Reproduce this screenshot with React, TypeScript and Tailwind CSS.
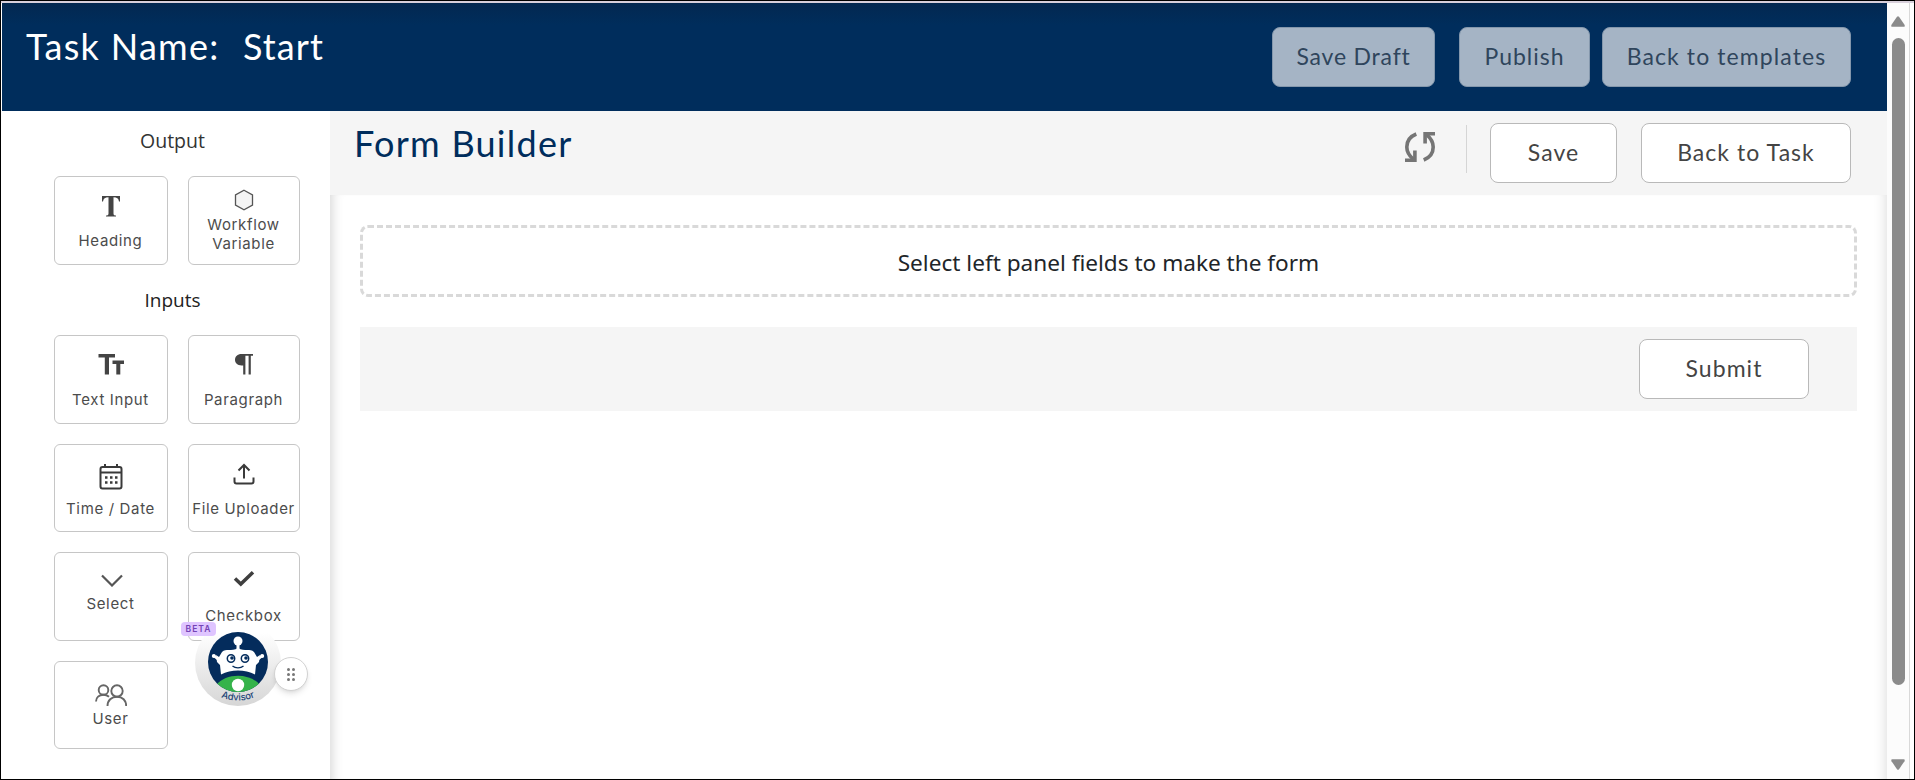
import { ReactNode } from "react";

type FieldProps = {
  label: string;
  icon: ReactNode;
  className?: string;
};

function Field({ label, icon, className = "pt-4" }: FieldProps) {
  return (
    <button
      className={`flex flex-col items-center h-[88.5px] w-full rounded-md border border-[#c6c6c6] bg-white pr-px
      font-[Inter,sans-serif] text-[15px] leading-[19px] tracking-[0.65px] text-[#4c4c4c] ${className}`}
    >
      {icon}
      {label}
    </button>
  );
}

function HeadingIcon() {
  return (
    <svg className="w-[20px] h-[22px] mb-[14px]" viewBox="0 0 20 22" fill="#444">
      <path d="M1 1h18v5.500h-1C17.500 3.500 16 2.300 12.500 2.300V18.500c0 1.500.7 2 2.500 2V21.500H5v-1c1.800 0 2.500-.5 2.500-2V2.300C4 2.300 2.500 3.500 2 6.500H1z" />
    </svg>
  );
}

function HexagonIcon() {
  return (
    <svg className="w-[20px] h-[22px] mb-[4px]" viewBox="0 0 20 22">
      <path d="M10 1.300l8.500 4.700v10L10 20.700 1.500 16V6z" fill="#f4f4f4" stroke="#555" strokeWidth="1.300" />
    </svg>
  );
}

function TextIcon() {
  return (
    <svg className="w-[26px] h-[22px] mb-[15px]" viewBox="0 0 26 22" fill="#444">
      <path d="M.5 1h16.500v3.600H11V21.500H6.800V4.600H.500z" />
      <path d="M14.500 7.500H26v3.600h-3.700V21.500h-4V11.100h-3.800z" />
    </svg>
  );
}

function ParagraphIcon() {
  return (
    <svg className="w-[20px] h-[22px] mb-[15px]" viewBox="0 0 20 22" fill="#444">
      <path d="M7.500 1H19v1.700h-2.200v18.800h-2.200V2.700h-3.200v18.800H9.200V12.500H7.500C3.500 12.500 1 10 1 6.800S3.500 1 7.500 1z" />
    </svg>
  );
}

function CalendarIcon() {
  return (
    <svg className="w-[24px] h-[27px] mb-[9px]" viewBox="0 0 24 27" fill="none" stroke="#3a3a3a" strokeWidth="2">
      <rect x="1.500" y="4" width="21" height="21.500" rx="2" />
      <path d="M2 9.500h20M6 1v3M18 1v3" />
      <path d="M6 14.500h2.500M11 14.500h2.500M16 14.500h2.500M6 19.500h2.500M11 19.500h2.500M16 19.500h2.500" strokeWidth="2.300" />
    </svg>
  );
}

function UploadIcon() {
  return (
    <svg className="w-[22px] h-[22px] mb-[14px]" viewBox="0 0 22 22" fill="none" stroke="#3a3a3a" strokeWidth="2">
      <path d="M11 15.500V2M5.500 7.500L11 2l5.500 5.500" />
      <path d="M1.500 14.500v4c0 1.300.5 2 2 2h15c1.500 0 2-.7 2-2v-4" />
    </svg>
  );
}

function ChevronIcon() {
  return (
    <svg className="w-[22px] h-[13px] mb-[7px] ml-[3px]" viewBox="0 0 22 13" fill="none" stroke="#555" strokeWidth="2.200">
      <path d="M1 1.500l10 10 10-10" />
    </svg>
  );
}

function CheckIcon() {
  return (
    <svg className="w-[22px] h-[17px] mb-[19px]" viewBox="0 0 22 17" fill="none" stroke="#3f3f3f" strokeWidth="3.500">
      <path d="M2 8.500l5.800 5.500L20 2.200" />
    </svg>
  );
}

function UsersIcon() {
  return (
    <svg className="w-[32px] h-[23px] mb-[2px]" viewBox="0 0 32 23" fill="none" stroke="#666" strokeWidth="1.900">
      <circle cx="8.500" cy="6" r="4.800" />
      <circle cx="22" cy="7" r="5.700" />
      <path d="M1 17.500c0-4 3-6.800 7.500-6.800 2.300 0 4 .8 5.500 2.100" />
      <path d="M12.500 22c0-5.500 4-9.300 9.500-9.300s9.200 3.800 9.200 9.300" />
    </svg>
  );
}

function RefreshIcon() {
  return (
    <svg className="w-[32px] h-[32px]" viewBox="0 0 32 32" fill="none" stroke="#757575" strokeWidth="3.600">
      <path d="M12.300 3C6 5.500 2.800 10.500 2.800 16c0 5 2.200 8.500 6.500 12.300" />
      <path d="M1 29.200h9.900V19.500" />
      <path d="M19.700 29c6.300-2.500 9.500-7.500 9.500-13 0-5-2.200-8.500-6.500-12.300" />
      <path d="M31 2.800h-9.900v9.700" />
    </svg>
  );
}

function AdvisorIcon() {
  return (
    <svg className="w-[60px] h-[74px] shrink-0" viewBox="0 0 60 74">
      <defs>
        <clipPath id="face">
          <circle cx="30" cy="30" r="30" />
        </clipPath>
        <path id="curve" d="M4 60.500Q30 76.500 56 60.500" />
      </defs>
      <g clipPath="url(#face)">
        <rect width="60" height="60" fill="#042c5c" />
        <path d="M8 53C18 40.500 42 40.500 52 53L46 62H14z" fill="#35b34a" />
      </g>
      <circle cx="30" cy="53" r="6.200" fill="#fff" />
      <circle cx="30" cy="9" r="4.500" fill="#fff" />
      <path d="M28.500 11h3v7h-3z" fill="#fff" />
      <path
        d="M14 20c4-4 9 0 16-4 7 4 12 0 16 4l3 5 3-2-1 7-3 3-1 9.500C37 37 23 37 13 42.500L12 33l-3-3-1-7 3 2z"
        fill="#fff"
      />
      <path d="M5.500 23.500L11 28M54.500 23.500L49 28" stroke="#fff" strokeWidth="2.500" />
      <circle cx="5.800" cy="24" r="2" fill="#fff" />
      <circle cx="54.200" cy="24" r="2" fill="#fff" />
      <circle cx="23" cy="26.500" r="3.700" fill="#fff" stroke="#042c5c" strokeWidth="1.500" />
      <circle cx="37" cy="26.500" r="3.700" fill="#fff" stroke="#042c5c" strokeWidth="1.500" />
      <circle cx="24" cy="26" r="1.800" fill="#042c5c" />
      <circle cx="38" cy="26" r="1.800" fill="#042c5c" />
      <path d="M24.500 34c3 2.500 8 2.500 11 0" fill="none" stroke="#042c5c" strokeWidth="1.300" />
      <text fill="#1d4477" fontSize="9.500" fontWeight="500" fontFamily="Inter, sans-serif">
        <textPath href="#curve" startOffset="50%" textAnchor="middle">
          Advisor
        </textPath>
      </text>
    </svg>
  );
}

function AdvisorWidget() {
  return (
    <div className="absolute left-[180px] top-[619px] w-[130px] h-[90px]">
      <div className="absolute left-[14px] top-0 size-[86px] rounded-full bg-gradient-to-b from-white from-15% to-[#d6d6d6] flex justify-center pt-[12px]">
        <AdvisorIcon />
      </div>
      <span className="absolute left-0 top-[2px] w-[35px] h-[14px] rounded-sm bg-[#dfc5ff] text-[#7443b5] text-[8.500px] leading-[14px] font-semibold tracking-[1px] text-center font-[Inter,sans-serif]">
        BETA
      </span>
      <div className="absolute left-[93px] top-[37px] size-[34px] rounded-full bg-white border border-[#d2d2d2] shadow-md flex items-center justify-center">
        <div className="grid grid-cols-2 gap-x-[2px] gap-y-[2px]">
          {[0, 1, 2, 3, 4, 5].map((dot) => (
            <i key={dot} className="size-[3px] rounded-full bg-[#777]"></i>
          ))}
        </div>
      </div>
    </div>
  );
}

const outlined =
  "h-[60px] pb-[2px] rounded-lg border border-[#b9b9b9] bg-white text-[#444] text-[23px] tracking-[1.05px] whitespace-nowrap";
const disabled =
  "h-[60px] pb-[2px] rounded-lg border border-[#8497ac] bg-[#a5b4c5] text-[#2f455c] text-[23px] whitespace-nowrap";

export default function App() {
  return (
    <div className="relative w-[1915px] h-[780px] overflow-hidden border border-black bg-white font-[Lato,sans-serif]">
      <div className="h-[2px] bg-[#d8d0db]"></div>
      <div className="flex h-[776px] pl-px">
        <div className="w-[1885px] flex flex-col">
          <header className="h-[108px] shrink-0 flex items-start bg-[#002d5c] bg-gradient-to-b from-[#032850] to-[#002d5c] to-20% pl-[24px] pr-[36px] text-white">
            <h1 className="mt-[19px] text-[36px] leading-[48px] whitespace-pre">
              <span className="inline-block w-[217px] tracking-[1.3px]">Task Name:</span>
              <span className="tracking-[1.1px]">Start</span>
            </h1>
            <div className="ml-auto mt-[24px] flex">
              <button className={`${disabled} w-[163px] mr-[24px] tracking-[0.8px]`}>Save Draft</button>
              <button className={`${disabled} w-[131px] mr-[12px] tracking-[1px]`}>Publish</button>
              <button className={`${disabled} w-[249px] tracking-[1.1px]`}>Back to templates</button>
            </div>
          </header>

          <div className="flex flex-1">
            <aside className="w-[328px] shrink-0 pl-[52px] pr-[28px] font-['Open_Sans',sans-serif]">
              <h2 className="h-[65px] pt-[17px] pr-[11px] text-[19.500px] leading-[26px] text-center text-[#333]">Output</h2>
              <div className="grid grid-cols-[114px_112px] gap-x-[20px]">
                <Field label="Heading" icon={<HeadingIcon />} className="pt-[18px]" />
                <Field label="Workflow Variable" icon={<HexagonIcon />} className="pt-[12px]" />
              </div>
              <h2 className="h-[70.5px] pt-[22px] pr-[11px] text-[19px] leading-[26px] text-center text-[#222]">Inputs</h2>
              <div className="grid grid-cols-[114px_112px] gap-x-[20px] gap-y-[20px]">
                <Field label="Text Input" icon={<TextIcon />} className="pt-[17px]" />
                <Field label="Paragraph" icon={<ParagraphIcon />} className="pt-[17px]" />
                <Field label="Time / Date" icon={<CalendarIcon />} className="pt-[18px]" />
                <Field label="File Uploader" icon={<UploadIcon />} className="pt-[18px] whitespace-nowrap" />
                <Field label="Select" icon={<ChevronIcon />} className="pt-[21px]" />
                <Field label="Checkbox" icon={<CheckIcon />} className="pt-[17px]" />
                <Field label="User" icon={<UsersIcon />} className="pt-[22px]" />
              </div>
            </aside>

            <main className="flex-1 flex flex-col">
              <div className="h-[84px] shrink-0 flex bg-[#f5f5f5] pl-[24px] pr-[36px]">
                <h1 className="mt-[8px] text-[36px] leading-[48px] tracking-[1.25px] text-[#002d5c]">Form Builder</h1>
                <div className="ml-auto flex pt-[12px]">
                  <div className="mt-[8px] mr-[30px]">
                    <RefreshIcon />
                  </div>
                  <div className="w-px h-[48px] mt-[2px] mr-[23px] bg-[#d5d5d5]"></div>
                  <button className={`${outlined} w-[127px] mr-[24px]`}>Save</button>
                  <button className={`${outlined} w-[210px]`}>Back to Task</button>
                </div>
              </div>
              <div className="flex-1 px-[30px] pt-[30px] shadow-[inset_12px_0_12px_-10px_#0000002b,inset_-12px_0_12px_-10px_#00000020]">
                <div className="h-[72px] pt-[3px] rounded-lg border-[3px] border-dashed border-[#d9d9d9] flex items-center justify-center text-[22.600px] text-[#212529] font-['Noto_Sans',sans-serif]">
                  Select left panel fields to make the form
                </div>
                <div className="mt-[30px] h-[84px] bg-[#f5f5f5] flex items-center justify-end pr-[48px]">
                  <button className={`${outlined} w-[170px]`}>Submit</button>
                </div>
              </div>
            </main>
          </div>
        </div>

        <div className="w-[23px] bg-[#fcfcfc] border-r border-[#d9d9d9] flex flex-col items-center pt-[13px] pb-[9px]">
          <svg className="w-[14px] h-[11px]" viewBox="0 0 14 11" fill="#8b8b8b">
            <path d="M6 .8q1-1.300 2 0l5.500 8q.8 2-.8 2H1.300q-1.600 0-.8-2z" />
          </svg>
          <div className="mt-[11px] w-[13px] h-[647px] rounded-full bg-[#8b8b8b]"></div>
          <svg className="mt-auto w-[14px] h-[11px]" viewBox="0 0 14 11" fill="#8b8b8b">
            <path d="M6 10.200q1 1.300 2 0l5.500-8q.8-2-.8-2H1.300q-1.600 0-.8 2z" />
          </svg>
        </div>
      </div>
      <AdvisorWidget />
    </div>
  );
}
